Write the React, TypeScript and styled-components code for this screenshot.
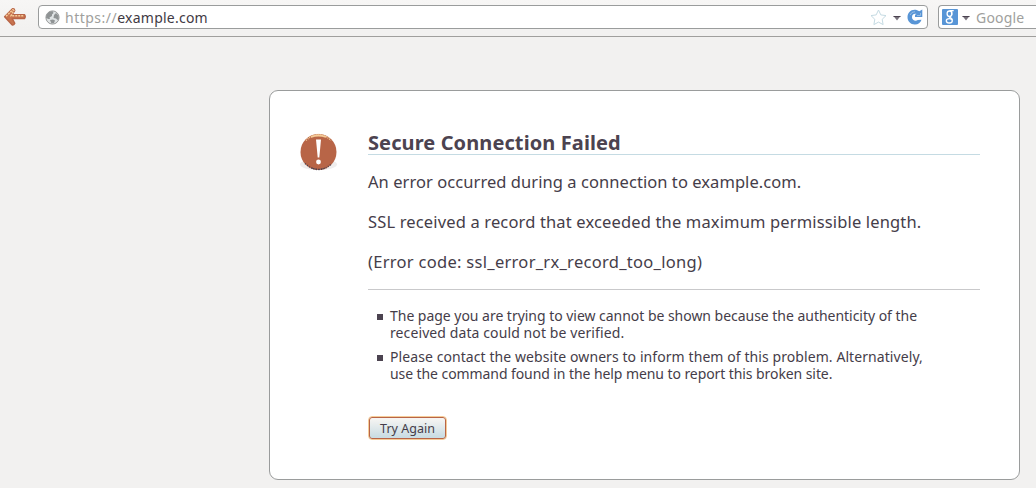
import React from 'react';
import styled, { createGlobalStyle } from 'styled-components';

const GlobalStyle = createGlobalStyle`
  *, *::before, *::after { box-sizing: border-box; }
  html, body { margin: 0; background: #f2f1f0; overflow: hidden; }
  body { font-family: 'Noto Sans', 'Open Sans', sans-serif; color: #453d49; }
`;

const Page = styled.div`
  width: 1036px;
  height: 488px;
  overflow: hidden;
  display: flex;
  flex-direction: column;
`;

const Toolbar = styled.header`
  flex: none;
  height: 37px;
  padding: 5px 0 0 2px;
  display: flex;
  align-items: flex-start;
  border-bottom: 1px solid #a09f9d;
  background: linear-gradient(#f7f6f5, #f2f1f0 80%);
`;

const BackButton = styled.button`
  width: 26px;
  height: 24px;
  margin-right: 10px;
  padding: 0;
  border: 0;
  background: none;
  flex: none;
  svg { display: block; }
`;

const Field = styled.div<{ $width: number; $left?: boolean }>`
  flex: none;
  width: ${p => p.$width}px;
  height: 24px;
  border: 1px solid #9a9c9c;
  border-radius: ${p => (p.$left ? '4px 0 0 4px' : '4px')};
  border-right-width: ${p => (p.$left ? 0 : 1)}px;
  background: #fff;
  display: flex;
  align-items: center;
  svg { display: block; flex: none; }
`;

const AddressField = styled(Field)`
  padding: 0 4px 0 6px;
  margin-right: 10px;
`;

const SearchField = styled(Field)`
  padding-left: 3px;
`;

const Address = styled.div`
  flex: 1;
  margin-left: 5px;
  font-size: 14px;
  line-height: 22px;
  padding-top: 1px;
  letter-spacing: 0.23px;
  color: #3f3a44;
`;

const Scheme = styled.span`
  color: #a09f9d;
  letter-spacing: 0.5px;
`;

const Placeholder = styled.span`
  margin-left: 6px;
  padding-top: 1px;
  font-size: 14px;
  line-height: 22px;
  letter-spacing: 0.2px;
  color: #a09f9d;
`;

const Actions = styled.div<{ $gap: number }>`
  display: flex;
  align-items: center;
  gap: ${p => p.$gap}px;
`;

const Card = styled.main`
  margin: 53px 0 0 269px;
  width: 751px;
  height: 390px;
  flex: none;
  padding: 38px 39px 0 30px;
  display: flex;
  align-items: flex-start;
  background: #fff;
  border: 1px solid #9a9c9c;
  border-radius: 9px;
`;

const AlertBox = styled.div`
  width: 38px;
  margin: 3px 30px 0 0;
  flex: none;
  svg { display: block; }
`;

const Content = styled.div`
  flex: none;
  width: 612px;
`;

const Title = styled.h1`
  margin: 0;
  height: 26px;
  font-size: 20px;
  line-height: 27px;
  font-weight: 700;
  letter-spacing: 0.1px;
  color: #4c4350;
  border-bottom: 1px solid #c5dbe3;
  white-space: nowrap;
`;

const Description = styled.div`
  height: 135px;
  padding-top: 17px;
  border-bottom: 1px solid #c9c9cb;
`;

const Line = styled.span<{ $spacing?: number }>`
  display: block;
  white-space: nowrap;
  letter-spacing: ${p => p.$spacing ?? 0}px;
`;

const Paragraph = styled.p`
  margin: 0 0 20px;
  font-size: 16.5px;
  line-height: 20px;
`;

const Reasons = styled.ul`
  list-style: none;
  margin: 17px 0 0;
  padding: 0;
`;

const Reason = styled.li`
  display: flex;
  margin-bottom: 7px;
  font-size: 14px;
  line-height: 17px;
  &::before {
    content: '';
    flex: none;
    width: 6px;
    height: 6px;
    margin: 7px 7px 0 9px;
    background: #4c4350;
  }
`;

const RetryButton = styled.button`
  display: block;
  width: 79px;
  height: 24px;
  margin-top: 34px;
  padding: 2px 0 0;
  border: 1px solid #f5cc98;
  border-radius: 4px;
  box-shadow: inset 0 0 0 1px #b86547;
  background: linear-gradient(#f5f4f2 10%, #cadde3 90%);
  color: #453d49;
  font: 12.5px/20px 'Noto Sans', sans-serif;
`;

const BackIcon = () => (
  <svg width="26" height="24" viewBox="0 0 26 24">
    <path d="M2.600 11.800 10.500 3.800Q12.500 3.500 12.800 5.500L10.200 9.700H22.500Q24 11.700 22.500 13.500H10.200L12.800 18.300Q12 20.500 10 19.800z" fill="#c9744f" stroke="#b86547" strokeWidth="1.400" strokeLinejoin="round" />
    <path d="M4 11.300 10.800 4.700 11.800 5.500 9 10.800H22" fill="none" stroke="#f5cc98" strokeWidth="1.500" strokeDasharray="2 1" />
  </svg>
);

const GlobeIcon = () => (
  <svg width="15" height="15" viewBox="0 0 15 15">
    <circle cx="7.500" cy="7.500" r="6.600" fill="#dfe3e4" stroke="#9a9c9c" />
    <path d="M1.500 5 4 2 7.500 1l1 2-1.500 1.500L7 6 4.500 7.500 5 9 3.500 9 1 8zM9 5l2-2 2.500 2.500.300 3.500-1.300 1-1.500-1.500L8.500 8zM5 10l3-.500 2 1-1 2.500-2.500.500z" fill="#8f9394" />
  </svg>
);

const StarIcon = () => (
  <svg width="17" height="17" viewBox="0 0 17 17">
    <path d="m8.500 1 2.300 4.900 5.200.700-3.800 3.700.9 5.300-4.600-2.500-4.600 2.500.9-5.300L1 6.600l5.200-.700z" fill="#fff" stroke="#c5dbe3" />
  </svg>
);

const DropIcon = () => (
  <svg width="8" height="8" viewBox="0 0 8 8">
    <path d="M.5 3h7L4 7.500z" fill="#77717b" />
    <path d="M.5 3.500h7" fill="none" stroke="#4c4350" />
  </svg>
);

const ReloadIcon = () => (
  <svg width="16" height="16" viewBox="0 0 16 16">
    <path d="M15.300.500V8H8V5.700L9.600 5C6.500 4.300 5 6 5 8.200c0 3.100 3.500 4.300 5.800 2.800l3.700-.200C13.500 14 11 15.600 7.800 15.500 3.500 15.300.500 12.300.500 8.200.500 3.800 3.500.800 7.500.700c2 0 3.500.500 4.800 1.600z" fill="#5895d6" />
    <path d="M3 6Q4.500 2.500 8 2.700M10 6.500h3.500V4" fill="none" stroke="#a5c6e4" strokeWidth=".8" />
  </svg>
);

const SearchEngineIcon = () => (
  <svg width="16" height="16" viewBox="0 0 16 16">
    <rect width="16" height="16" rx="1" fill="#5895d6" />
    <g fill="none" stroke="#fff" strokeWidth="1.300">
      <ellipse cx="7.500" cy="4.700" rx="2.400" ry="2.700" />
      <path d="M7.500 1.700h4.200M9.600 2v4M7.500 7.400c-1.300 1 2.600 1.300 2.800 3.300" />
      <ellipse cx="7.300" cy="11.800" rx="3" ry="2.200" />
    </g>
  </svg>
);

const AlertIcon = () => (
  <svg width="38" height="42" viewBox="0 0 38 42">
    <ellipse cx="18.500" cy="32.500" rx="18.500" ry="5.500" fill="#efeeee" />
    <circle cx="18.500" cy="20" r="18" fill="#b86547" />
    <g fill="none">
      <path d="M6 8.500Q18.500-3.500 31 8.500" stroke="#f5cc98" strokeWidth="1.500" strokeDasharray="1 1" />
      <path d="M11 5Q18.500 2 26 5" stroke="#f5cc98" strokeWidth="1.800" />
      <path d="M5 31.500Q18.500 43.500 32 31.500" stroke="#4c4350" strokeWidth="1.500" strokeDasharray="1 1.500" />
      <path d="M12 36Q18.500 38.800 25 36" stroke="#4c4350" strokeDasharray="2 1" />
    </g>
    <path d="M16 7.500h5L19.300 25.500h-1.600z" fill="#fff" />
    <circle cx="18.500" cy="30" r="2.400" fill="#fff" />
  </svg>
);

export default function App() {
  return (
    <Page>
      <GlobalStyle />
      <Toolbar>
        <BackButton aria-label="Back"><BackIcon /></BackButton>
        <AddressField $width={890}>
          <GlobeIcon />
          <Address><Scheme>https://</Scheme>example.com</Address>
          <Actions $gap={6}><StarIcon /><DropIcon /><ReloadIcon /></Actions>
        </AddressField>
        <SearchField $width={98} $left>
          <Actions $gap={4}><SearchEngineIcon /><DropIcon /></Actions>
          <Placeholder>Google</Placeholder>
        </SearchField>
      </Toolbar>
      <Card>
        <AlertBox><AlertIcon /></AlertBox>
        <Content>
          <Title>Secure Connection Failed</Title>
          <Description>
            <Paragraph><Line $spacing={0.06}>An error occurred during a connection to example.com.</Line></Paragraph>
            <Paragraph><Line $spacing={0.15}>SSL received a record that exceeded the maximum permissible length.</Line></Paragraph>
            <Paragraph><Line $spacing={0.29}>(Error code: ssl_error_rx_record_too_long)</Line></Paragraph>
          </Description>
          <Reasons>
            <Reason>
              <div>
                <Line $spacing={-0.03}>The page you are trying to view cannot be shown because the authenticity of the</Line>
                <Line $spacing={0.1}>received data could not be verified.</Line>
              </div>
            </Reason>
            <Reason>
              <div>
                <Line $spacing={0.08}>Please contact the website owners to inform them of this problem. Alternatively,</Line>
                <Line $spacing={-0.08}>use the command found in the help menu to report this broken site.</Line>
              </div>
            </Reason>
          </Reasons>
          <RetryButton>Try Again</RetryButton>
        </Content>
      </Card>
    </Page>
  );
}
